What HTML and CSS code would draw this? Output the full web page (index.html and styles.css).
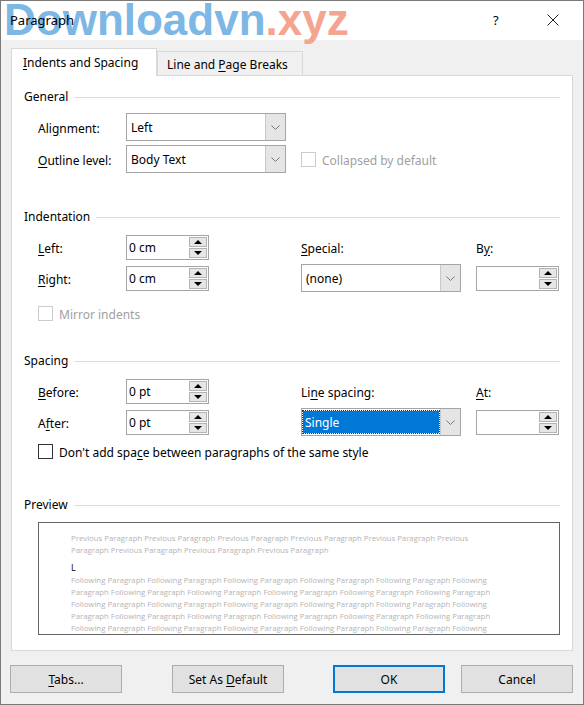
FILE: index.html
```html
<!DOCTYPE html>
<html>
<head>
<meta charset="utf-8">
<title>Paragraph</title>
<link rel="stylesheet" href="styles.css">
</head>
<body>
<div class="window">
  <div class="titlebar">
    <span class="watermark"><span class="wm-blue">Downloadvn</span><span class="wm-red">.xyz</span></span>
    <span class="title">Paragraph</span>
    <span class="tb-help">?</span>
    <span class="tb-close"><svg width="12" height="12" viewBox="0 0 12 12"><path d="M0.5 0.5 L11.5 11.5 M11.5 0.5 L0.5 11.5" stroke="#222" stroke-width="1" fill="none"/></svg></span>
  </div>

  <div class="main">
    <div class="tabs">
      <div class="tab active"><u>I</u>ndents and Spacing</div>
      <div class="tab">Line and <u>P</u>age Breaks</div>
    </div>

    <div class="panel">
      <div class="group-head first"><span>General</span><i></i></div>
      <div class="grid general">
        <div class="label">Ali<u>g</u>nment:</div>
        <div class="combo"><span class="combo-val">Left</span><span class="combo-btn"><svg width="9" height="5" viewBox="0 0 9 5"><path d="M0.5 0.5 L4.5 4.5 L8.5 0.5" stroke="#777" fill="none"/></svg></span></div>
        <div></div>
        <div class="label"><u>O</u>utline level:</div>
        <div class="combo"><span class="combo-val">Body Text</span><span class="combo-btn"><svg width="9" height="5" viewBox="0 0 9 5"><path d="M0.5 0.5 L4.5 4.5 L8.5 0.5" stroke="#777" fill="none"/></svg></span></div>
        <div class="check disabled"><span class="box"></span><span>Collapsed by default</span></div>
      </div>

      <div class="group-head indent-head"><span>Indentation</span><i></i></div>
      <div class="grid quad ind">
        <div class="label"><u>L</u>eft:</div>
        <div class="spin"><span class="spin-val">0 cm</span><span class="spin-btns"><span class="sb up"></span><span class="sb down"></span></span></div>
        <div class="label"><u>S</u>pecial:</div>
        <div class="label">B<u>y</u>:</div>
        <div class="label"><u>R</u>ight:</div>
        <div class="spin"><span class="spin-val">0 cm</span><span class="spin-btns"><span class="sb up"></span><span class="sb down"></span></span></div>
        <div class="combo"><span class="combo-val">(none)</span><span class="combo-btn"><svg width="9" height="5" viewBox="0 0 9 5"><path d="M0.5 0.5 L4.5 4.5 L8.5 0.5" stroke="#777" fill="none"/></svg></span></div>
        <div class="spin"><span class="spin-val"></span><span class="spin-btns"><span class="sb up"></span><span class="sb down"></span></span></div>
      </div>
      <div class="check disabled mirror"><span class="box"></span><span>Mirror indents</span></div>

      <div class="group-head spacing-head"><span>Spacing</span><i></i></div>
      <div class="grid quad spc">
        <div class="label"><u>B</u>efore:</div>
        <div class="spin"><span class="spin-val">0 pt</span><span class="spin-btns"><span class="sb up"></span><span class="sb down"></span></span></div>
        <div class="label">Li<u>n</u>e spacing:</div>
        <div class="label"><u>A</u>t:</div>
        <div class="label">A<u>f</u>ter:</div>
        <div class="spin"><span class="spin-val">0 pt</span><span class="spin-btns"><span class="sb up"></span><span class="sb down"></span></span></div>
        <div class="combo"><span class="combo-val selected"><span class="sel">Single</span></span><span class="combo-btn"><svg width="9" height="5" viewBox="0 0 9 5"><path d="M0.5 0.5 L4.5 4.5 L8.5 0.5" stroke="#777" fill="none"/></svg></span></div>
        <div class="spin"><span class="spin-val"></span><span class="spin-btns"><span class="sb up"></span><span class="sb down"></span></span></div>
      </div>
      <div class="check dontadd"><span class="box"></span><span>Don't add spa<u>c</u>e between paragraphs of the same style</span></div>

      <div class="group-head preview-head"><span>Preview</span><i></i></div>
      <div class="preview">
        <div class="pv">Previous Paragraph Previous Paragraph Previous Paragraph Previous Paragraph Previous Paragraph Previous</div>
        <div class="pv">Paragraph Previous Paragraph Previous Paragraph Previous Paragraph</div>
        <div class="pv cur">L</div>
        <div class="pv">Following Paragraph Following Paragraph Following Paragraph Following Paragraph Following Paragraph Following</div>
        <div class="pv">Paragraph Following Paragraph Following Paragraph Following Paragraph Following Paragraph Following Paragraph</div>
        <div class="pv">Following Paragraph Following Paragraph Following Paragraph Following Paragraph Following Paragraph Following</div>
        <div class="pv">Paragraph Following Paragraph Following Paragraph Following Paragraph Following Paragraph Following Paragraph</div>
        <div class="pv">Following Paragraph Following Paragraph Following Paragraph Following Paragraph Following Paragraph Following</div>
      </div>
    </div>
  </div>

  <div class="footer">
    <div class="btn"><u>T</u>abs...</div>
    <div class="btn setdef">Set As <u>D</u>efault</div>
    <div class="btn ok">OK</div>
    <div class="btn cancel">Cancel</div>
  </div>
</div>
</body>
</html>
```

FILE: styles.css
```css
* { box-sizing: border-box; }
html, body { margin: 0; padding: 0; }
body {
  font-family: "Noto Sans", "Open Sans", sans-serif;
  font-size: 12px;
  color: #000;
  background: #f0f0f0;
}
u { text-decoration: underline; text-underline-offset: 2px; }

.window {
  width: 584px;
  height: 705px;
  border: 1px solid #7a7a7a;
  background: #f0f0f0;
  display: flex;
  flex-direction: column;
  overflow: hidden;
}

/* title bar */
.titlebar {
  height: 39px;
  background: #fff;
  display: flex;
  align-items: center;
  position: relative;
  padding-left: 9px;
}
.title { position: relative; z-index: 2; font-size: 13px; margin-top: -1px; }
.tb-help { position: relative; z-index: 2; margin-left: 419px; font-size: 13px; margin-top: -1px; }
.tb-close { position: relative; z-index: 2; margin-left: 48px; display: flex; margin-top: -1px; }
.watermark {
  position: absolute;
  left: 3px;
  top: -6px;
  font-family: "Liberation Sans", Arial, sans-serif;
  font-weight: bold;
  font-size: 44px;
  z-index: 1;
  white-space: nowrap;
}
.wm-blue { color: #7db7e4; }
.wm-red { color: #f4a48f; }

/* tabs + panel */
.main { padding: 9px 10px 0 10px; }
.tabs {
  display: flex;
  align-items: flex-end;
  height: 27px;
  margin-bottom: -1px;
  position: relative;
  z-index: 1;
}
.tab {
  height: 25px;
  width: 146px;
  border: 1px solid #d9d9d9;
  background: #f0f0f0;
  padding-left: 9px;
  line-height: 25px;
}
.tab.active {
  height: 28px;
  width: 146px;
  background: #fff;
  border-bottom: none;
  padding-left: 11px;
  line-height: 28px;
}
.panel {
  height: 576px;
  background: #fff;
  border: 1px solid #d9d9d9;
  padding: 0 12px;
}

.group-head {
  display: flex;
  align-items: center;
  height: 16px;
  line-height: 18px;
  gap: 6px;
}
.group-head i { flex: 1; height: 1px; background: #dcdcdc; }
.group-head.first { margin-top: 13px; }
.indent-head { margin-top: 36px; }
.spacing-head { margin-top: 32px; }
.preview-head { margin-top: 38px; }

.grid { display: grid; margin-left: 14px; align-items: center; }
.general {
  margin-top: 8px;
  grid-template-columns: 88px 175px auto;
  grid-template-rows: 28px 28px;
  row-gap: 4px;
}
.quad {
  margin-top: 9px;
  grid-template-columns: 88px 175px 175px 84px;
  grid-template-rows: 26px 28px;
  row-gap: 4px;
}

.label { white-space: nowrap; padding-top: 2px; }

/* combo */
.combo {
  width: 160px;
  height: 28px;
  border: 1px solid #a5a5a5;
  background: #fff;
  display: flex;
}
.combo-val { flex: 1; padding-left: 4px; line-height: 28px; }
.combo-val.selected { padding: 2px 1px 2px 1px; }
.sel {
  display: block;
  height: 22px;
  line-height: 24px;
  background: #0078d7;
  color: #fff;
  padding-left: 2px;
  outline: 1px dotted #333;
}
.combo-btn {
  width: 20px;
  background: #e5e5e5;
  border-left: 1px solid #c9c9c9;
  display: flex;
  align-items: center;
  justify-content: center;
}

/* spin */
.spin {
  width: 83px;
  height: 25px;
  border: 1px solid #a5a5a5;
  background: #fff;
  display: flex;
}
.spin-val { flex: 1; padding-left: 2px; line-height: 24px; }
.spin-btns {
  width: 19px;
  padding: 1px 1px 1px 0;
  display: flex;
  flex-direction: column;
  gap: 1px;
}
.sb {
  flex: 1;
  background: #e6e6e6;
  border: 1px solid #b4b4b4;
  display: flex;
  align-items: center;
  justify-content: center;
}
.sb.up::before {
  content: "";
  border-left: 4px solid transparent;
  border-right: 4px solid transparent;
  border-bottom: 4px solid #000;
}
.sb.down::before {
  content: "";
  border-left: 4px solid transparent;
  border-right: 4px solid transparent;
  border-top: 4px solid #000;
}

/* checkboxes */
.check { display: flex; align-items: center; gap: 6px; height: 16px; white-space: nowrap; }
.check > span:last-child { padding-top: 2px; }
.check .box { width: 15px; height: 15px; border: 1px solid #333; background: #fff; }
.check.disabled { color: #a0a0a0; }
.check.disabled .box { border-color: #cccccc; }
.mirror { margin: 13px 0 0 14px; }
.dontadd { margin: 7px 0 0 14px; }

/* preview */
.preview {
  margin: 9px 0 0 14px;
  width: 522px;
  height: 113px;
  border: 1px solid #646464;
  padding: 9px 0 0 32px;
  overflow: hidden;
  font-family: "Open Sans", sans-serif;
  font-size: 7.8px;
  color: #b4b4b4;
}
.pv { height: 12px; line-height: 12px; white-space: nowrap; }
.pv.cur { color: #000; margin-top: 6px; font-size: 9px; }

/* footer */
.footer {
  display: flex;
  padding: 14px 10px 0 9px;
}
.btn {
  width: 112px;
  height: 28px;
  background: #e1e1e1;
  border: 1px solid #adadad;
  text-align: center;
  line-height: 27px;
}
.setdef { margin-left: 50px; }
.ok { margin-left: auto; border: 2px solid #0078d7; line-height: 25px; }
.cancel { margin-left: 16px; }
```
